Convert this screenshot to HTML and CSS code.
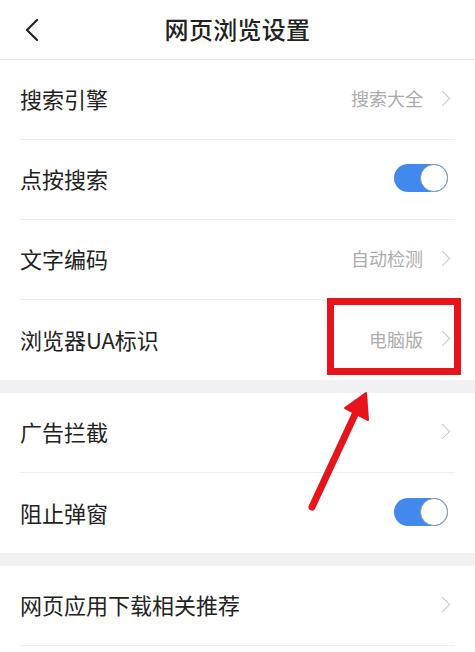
FILE: index.html
```html
<!DOCTYPE html>
<html lang="zh-CN">
<head>
<meta charset="utf-8">
<link rel="stylesheet" href="styles.css">
</head>
<body>
<div class="page">
  <header class="topbar">
    <svg class="back" width="14" height="22" viewBox="0 0 14 22"><path d="M12 1 L2 11 L12 21" fill="none" stroke="#222" stroke-width="2.2" stroke-linecap="round" stroke-linejoin="round"/></svg>
    <h1 class="title">网页浏览设置</h1>
  </header>
  <section class="group">
    <div class="row"><span class="label">搜索引擎</span><span class="right"><span class="value">搜索大全</span><span class="chev"></span></span></div>
    <div class="row"><span class="label">点按搜索</span><span class="switch"><span class="knob"></span></span></div>
    <div class="row"><span class="label">文字编码</span><span class="right"><span class="value">自动检测</span><span class="chev"></span></span></div>
    <div class="row last"><span class="label">浏览器UA标识</span><span class="right"><span class="value">电脑版</span><span class="chev"></span></span></div>
  </section>
  <section class="group">
    <div class="row"><span class="label">广告拦截</span><span class="right"><span class="chev"></span></span></div>
    <div class="row last"><span class="label">阻止弹窗</span><span class="switch"><span class="knob"></span></span></div>
  </section>
  <section class="group final">
    <div class="row"><span class="label">网页应用下载相关推荐</span><span class="right"><span class="chev"></span></span></div>
  </section>
  <div class="highlight"></div>
  <svg class="arrow" width="475" height="652" viewBox="0 0 475 652">
    <line x1="312" y1="507" x2="358" y2="408" stroke="#e8141c" stroke-width="7" stroke-linecap="round"/>
    <polygon points="366,393 368,420 345,408" fill="#e8141c" stroke="#e8141c" stroke-width="2" stroke-linejoin="round"/>
  </svg>
</div>
</body>
</html>
```
FILE: styles.css
```css
* { box-sizing: border-box; }
html, body { margin: 0; padding: 0; }
body {
  background: #ffffff;
  font-family: "Noto Sans CJK SC", "Noto Sans", sans-serif;
  color: #222;
}
.page {
  position: relative;
  width: 475px;
  height: 652px;
  overflow: hidden;
  background: #fff;
}
.topbar {
  position: relative;
  height: 60px;
  display: flex;
  align-items: center;
  justify-content: center;
  border-bottom: 1px solid #e4e4e4;
}
.back {
  position: absolute;
  left: 25px;
  top: 19px;
}
.title {
  margin: 0 0 2px 0;
  font-size: 24px;
  font-weight: 500;
  color: #222;
  letter-spacing: 0.3px;
}
.group {
  background: #fff;
  border-bottom: 13px solid #f1f0f3;
}
.group.final {
  border-bottom: none;
}
.row {
  height: 80px;
  margin: 0 20px;
  display: flex;
  align-items: center;
  justify-content: space-between;
  border-bottom: 1px solid #efefef;
  padding-bottom: 3px;
}
.row.last { border-bottom: none; }
.label {
  font-size: 22px;
  color: #222;
}
.right {
  display: flex;
  align-items: center;
  gap: 14px;
}
.value {
  font-size: 18px;
  color: #ababab;
}
.chev {
  width: 11px;
  height: 11px;
  border-top: 1.6px solid #c6c6c6;
  border-right: 1.6px solid #c6c6c6;
  transform: rotate(45deg);
  margin-right: 7px;
}
.switch {
  position: relative;
  width: 54px;
  height: 28px;
  border-radius: 14px;
  background: #4189ec;
  margin-right: 7px;
}
.knob {
  position: absolute;
  right: 0;
  top: 0;
  width: 28px;
  height: 28px;
  border-radius: 50%;
  background: #fff;
  border: 1.5px solid #8a9bb0;
}
.highlight {
  position: absolute;
  left: 327px;
  top: 298px;
  width: 134px;
  height: 77px;
  border: 7px solid #e8141c;
}
.arrow {
  position: absolute;
  left: 0;
  top: 0;
  pointer-events: none;
}
```
